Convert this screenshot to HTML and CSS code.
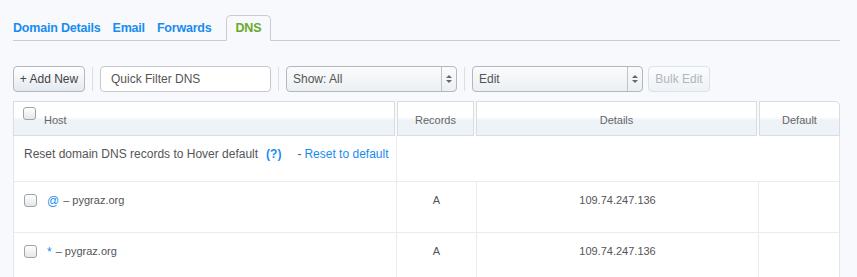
FILE: index.html
```html
<!DOCTYPE html>
<html lang="en">
<head>
    <meta charset="UTF-8">
    <title>DNS - Hover</title>
    <link rel="stylesheet" href="styles.css">
</head>
<body>

<div class="page">
    <div class="tabs">
        <a class="tab">Domain Details</a>
        <a class="tab">Email</a>
        <a class="tab">Forwards</a>
        <a class="tab active">DNS</a>
    </div>

    <div class="toolbar">
        <button class="btn">+ Add New</button>
        <span class="sep"></span>
        <input class="filter" type="text" value="Quick Filter DNS">
        <span class="sep"></span>
        <div class="select"><span>Show: All</span><i class="arrows"></i></div>
        <span class="sep"></span>
        <div class="select"><span>Edit</span><i class="arrows"></i></div>
        <button class="btn disabled">Bulk Edit</button>
    </div>

    <div class="grid-head">
        <div class="hcell host"><span class="check"></span><span class="htext">Host</span></div>
        <div class="hcell">Records</div>
        <div class="hcell">Details</div>
        <div class="hcell last">Default</div>
    </div>

    <div class="grid-body">
        <div class="row reset">
            <div class="cell host-cell">Reset domain DNS records to Hover default <a class="link help">(?)</a> <span class="dash">-</span><a class="link">Reset to default</a></div>
            <div class="cell span"></div>
        </div>
        <div class="row">
            <div class="cell host-cell"><span class="check"></span><a class="link name">@</a> – pygraz.org</div>
            <div class="cell center">A</div>
            <div class="cell center">109.74.247.136</div>
            <div class="cell"></div>
        </div>
        <div class="row">
            <div class="cell host-cell"><span class="check"></span><a class="link name">*</a> – pygraz.org</div>
            <div class="cell center">A</div>
            <div class="cell center">109.74.247.136</div>
            <div class="cell"></div>
        </div>
    </div>
</div>

</body>
</html>
```

FILE: styles.css
```css
body {
    margin: 0;
    padding: 0;
    background-color: #f7f9fc;
    font-family: 'Liberation Sans', Arial, sans-serif;
    color: #555;
}

.page {
    width: 827px;
    padding-left: 13px;
}

/* tabs */
.tabs {
    display: flex;
    align-items: flex-end;
    margin-top: 15px;
    height: 25px;
    border-bottom: 1px solid #c9ccd0;
}

.tab {
    font-size: 12.5px;
    font-weight: bold;
    color: #1a8cf0;
    margin-right: 12px;
    padding-bottom: 5px;
    letter-spacing: -0.2px;
}

.tab.active {
    color: #6aaa2a;
    border: 1px solid #c9ccd0;
    border-bottom: 1px solid #f7f9fc;
    border-radius: 5px 5px 0 0;
    padding: 5px 9px 5px 9px;
    margin-left: 2px;
    margin-bottom: -1px;
    background-color: #f7f9fc;
}

/* toolbar */
.toolbar {
    display: flex;
    align-items: center;
    margin-top: 25px;
    height: 26px;
}

.btn {
    height: 26px;
    font-family: 'Liberation Sans', Arial, sans-serif;
    font-size: 12px;
    color: #444;
    border: 1px solid #b4b8bc;
    border-radius: 4px;
    background: linear-gradient(#ffffff, #f2f5f8 50%, #e3e9ef);
    padding: 0;
    width: 72px;
    white-space: nowrap;
}

.btn.disabled {
    color: #b0b6bd;
    border-color: #dde2e7;
    background: linear-gradient(#fbfcfd, #eef2f6);
    width: 62px;
    margin-left: 5px;
}

.sep {
    width: 1px;
    height: 24px;
    background-color: #dcdfe2;
    margin: 0 7px 0 7px;
}

.filter {
    box-sizing: border-box;
    width: 171px;
    height: 26px;
    border: 1px solid #c5c9cd;
    border-radius: 4px;
    background-color: #fff;
    font-family: 'Liberation Sans', Arial, sans-serif;
    font-size: 12px;
    color: #555;
    padding: 0 10px;
}

.select {
    box-sizing: border-box;
    width: 171px;
    height: 26px;
    display: flex;
    align-items: center;
    border: 1px solid #b4b8bc;
    border-radius: 4px;
    background: linear-gradient(#fafbfc, #eceff2);
    font-size: 12px;
    color: #555;
    position: relative;
}

.select span {
    flex: 1;
    padding-left: 6px;
}

.arrows {
    width: 14px;
    height: 24px;
    border-left: 1px solid #c0c4c8;
    position: relative;
}

.arrows::before,
.arrows::after {
    content: "";
    position: absolute;
    left: 4px;
    border-left: 3px solid transparent;
    border-right: 3px solid transparent;
}

.arrows::before {
    top: 8px;
    border-bottom: 3px solid #666;
}

.arrows::after {
    top: 13px;
    border-top: 3px solid #666;
}

/* table */
.grid-head {
    display: grid;
    grid-template-columns: 382px 77px 281px 81px;
    column-gap: 2px;
    margin-top: 9px;
}

.hcell {
    box-sizing: border-box;
    height: 35px;
    border: 1px solid #d7dde3;
    background: linear-gradient(#ffffff 45%, #eef3f8 55%, #eef3f8);
    font-size: 11px;
    color: #666;
    text-align: center;
    padding-top: 12px;
}

.hcell.host {
    display: flex;
    align-items: flex-start;
    text-align: left;
    padding-top: 5px;
    padding-left: 9px;
}

.htext {
    margin-left: -2px;
    margin-top: 7px;
    padding-left: 10px;
}

.hcell.last {
    border-top-right-radius: 5px;
}

.grid-body {
    background-color: #fff;
    border-left: 1px solid #e4e7ea;
    border-right: 1px solid #e4e7ea;
    margin-top: -1px;
}

.row {
    display: grid;
    grid-template-columns: 382px 80px 282px 81px;
    border-bottom: 1px solid #ebebeb;
    height: 50px;
}

.row.reset {
    grid-template-columns: 382px 1fr;
    height: 46px;
}

.cell {
    font-size: 11px;
    color: #555;
    padding-top: 12px;
    border-left: 1px solid #ebebeb;
}

.cell.host-cell {
    border-left: none;
    display: flex;
    align-items: flex-start;
    padding-left: 10px;
    white-space: nowrap;
}

.row.reset .cell {
    font-size: 12px;
    padding-top: 12px;
}

.cell.center {
    text-align: center;
}

.link {
    color: #1a8cf0;
}

.help {
    font-weight: bold;
    margin: 0 16px 0 8px;
}

.dash {
    margin-right: 3px;
}

.name {
    margin: 0 4px 0 10px;
    font-size: 12px;
}

.check {
    box-sizing: border-box;
    width: 13px;
    height: 13px;
    border: 1px solid #9ea3a8;
    border-radius: 3px;
    background: linear-gradient(#ffffff, #e4e7ea);
    display: inline-block;
}
```
